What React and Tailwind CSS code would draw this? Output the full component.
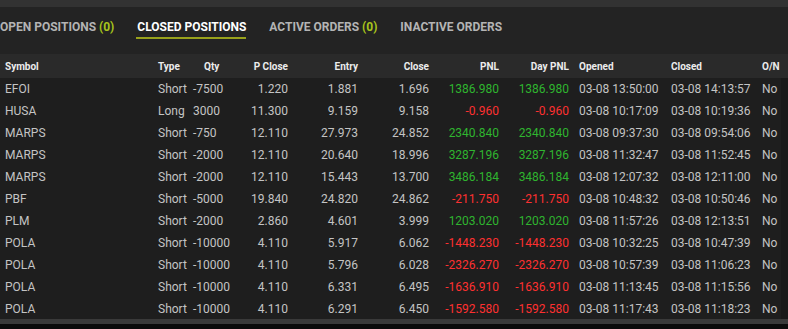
const ROWS = [
  ['EFOI', 'Short', '-7500', '1.220', '1.881', '1.696', '1386.980', '1386.980', '03-08 13:50:00', '03-08 14:13:57'],
  ['HUSA', 'Long', '3000', '11.300', '9.159', '9.158', '-0.960', '-0.960', '03-08 10:17:09', '03-08 10:19:36'],
  ['MARPS', 'Short', '-750', '12.110', '27.973', '24.852', '2340.840', '2340.840', '03-08 09:37:30', '03-08 09:54:06'],
  ['MARPS', 'Short', '-2000', '12.110', '20.640', '18.996', '3287.196', '3287.196', '03-08 11:32:47', '03-08 11:52:45'],
  ['MARPS', 'Short', '-2000', '12.110', '15.443', '13.700', '3486.184', '3486.184', '03-08 12:07:32', '03-08 12:11:00'],
  ['PBF', 'Short', '-5000', '19.840', '24.820', '24.862', '-211.750', '-211.750', '03-08 10:48:32', '03-08 10:50:46'],
  ['PLM', 'Short', '-2000', '2.860', '4.601', '3.999', '1203.020', '1203.020', '03-08 11:57:26', '03-08 12:13:51'],
  ['POLA', 'Short', '-10000', '4.110', '5.917', '6.062', '-1448.230', '-1448.230', '03-08 10:32:25', '03-08 10:47:39'],
  ['POLA', 'Short', '-10000', '4.110', '5.796', '6.028', '-2326.270', '-2326.270', '03-08 10:57:39', '03-08 11:06:23'],
  ['POLA', 'Short', '-10000', '4.110', '6.331', '6.495', '-1636.910', '-1636.910', '03-08 11:13:45', '03-08 11:15:56'],
  ['POLA', 'Short', '-10000', '4.110', '6.291', '6.450', '-1592.580', '-1592.580', '03-08 11:17:43', '03-08 11:18:23'],
]

function Tab({ label, count, active }) {
  return (
    <div className="relative flex items-center h-[32px]">
      <span className={`font-bold text-[12px] ${active ? 'text-white' : 'text-[#b4b4b4]'}`}>
        {label}
        {count !== undefined && <span className="text-[#a8c41c]"> ({count})</span>}
      </span>
      {active && <div className="absolute left-[-1px] right-0 top-[26px] h-[2px] bg-[#99a21c]" />}
    </div>
  )
}

function Row({ r }) {
  const pnlColor = r[6].startsWith('-') ? 'text-[#ff3030]' : 'text-[#2fb52f]'
  return (
    <div className="flex items-center h-[22px] text-[12px] text-[#c4c4c4] whitespace-nowrap">
      <div className="w-[158px] pl-[5px]">{r[0]}</div>
      <div className="w-[35px]">{r[1]}</div>
      <div className="w-[47px]">{r[2]}</div>
      <div className="w-[48px] text-right">{r[3]}</div>
      <div className="w-[70px] text-right">{r[4]}</div>
      <div className="w-[71px] text-right">{r[5]}</div>
      <div className={`w-[70px] text-right ${pnlColor}`}>{r[6]}</div>
      <div className={`w-[70px] text-right ${pnlColor}`}>{r[7]}</div>
      <div className="w-[92px] pl-[10px]">{r[8]}</div>
      <div className="w-[91px] pl-[10px]">{r[9]}</div>
      <div className="pl-[10px]">No</div>
    </div>
  )
}

export default function App() {
  return (
    <div className="w-[788px] h-[329px] overflow-hidden flex flex-col bg-[#1e1e1e] font-['Roboto',sans-serif]">
      {/* top strip */}
      <div className="h-[7px] bg-[#323232] shrink-0" />

      {/* tabs */}
      <div className="h-[47px] shrink-0 bg-[#232323] flex items-start">
        <div className="flex gap-[23px] pt-[4px]">
          <Tab label="OPEN POSITIONS" count={0} />
          <Tab label="CLOSED POSITIONS" active />
          <Tab label="ACTIVE ORDERS" count={0} />
          <Tab label="INACTIVE ORDERS" />
        </div>
      </div>

      {/* header */}
      <div className="flex items-center h-[24px] shrink-0 bg-[#2a2a2a] text-[10px] font-bold text-[#ececec] whitespace-nowrap">
        <div className="w-[158px] pl-[5px]">Symbol</div>
        <div className="w-[35px]">Type</div>
        <div className="w-[47px] pl-[11px]">Qty</div>
        <div className="w-[48px] text-right">P Close</div>
        <div className="w-[70px] text-right">Entry</div>
        <div className="w-[71px] text-right">Close</div>
        <div className="w-[70px] text-right">PNL</div>
        <div className="w-[70px] text-right">Day PNL</div>
        <div className="w-[92px] pl-[10px]">Opened</div>
        <div className="w-[91px] pl-[10px]">Closed</div>
        <div className="pl-[10px]">O/N</div>
      </div>

      {/* rows */}
      <div className="flex-1 overflow-hidden flex">
        <div className="flex-1">
          {ROWS.map((r, i) => <Row key={i} r={r} />)}
        </div>
        <div className="w-[7px] bg-[#191919]" />
      </div>

      {/* scrollbar */}
      <div className="h-[5px] shrink-0 bg-[#3a3a3a]" />
      <div className="h-[5px] shrink-0 bg-[#0b0b0b]" />
    </div>
  )
}
